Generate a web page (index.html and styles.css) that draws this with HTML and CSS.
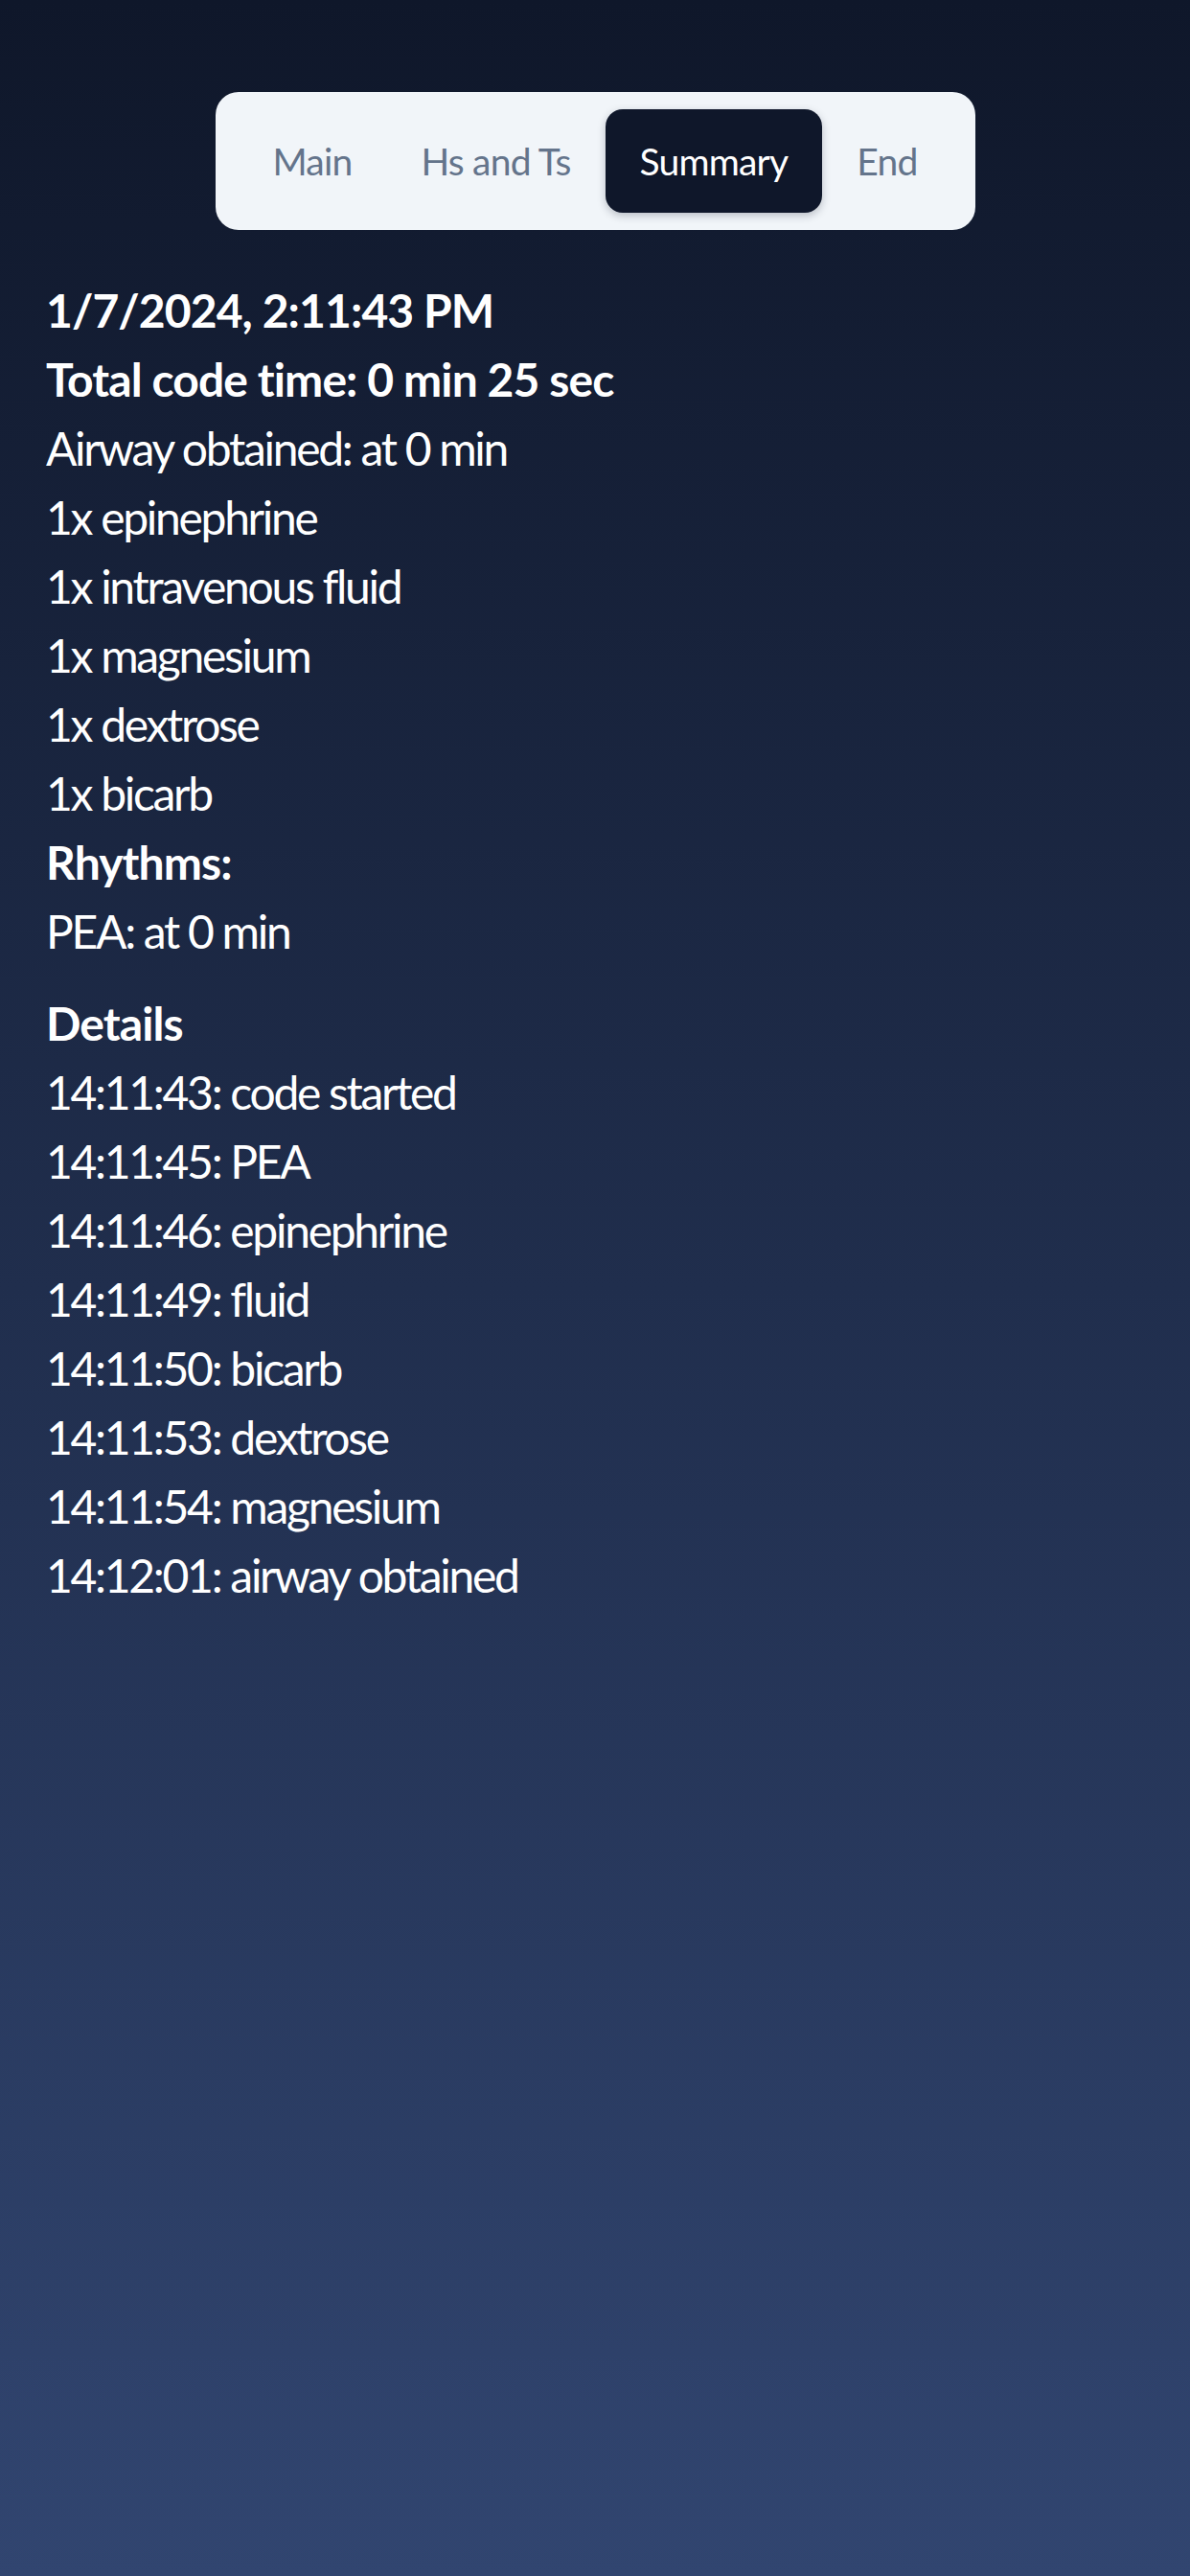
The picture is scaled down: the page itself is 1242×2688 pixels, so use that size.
FILE: index.html
```html
<!DOCTYPE html>
<html lang="en">
<head>
<meta charset="utf-8">
<title>Summary</title>
<link rel="stylesheet" href="styles.css">
</head>
<body>
<div class="page">
  <nav class="tabs">
    <span class="tab">Main</span>
    <span class="tab">Hs and Ts</span>
    <span class="tab active">Summary</span>
    <span class="tab">End</span>
  </nav>
  <section class="summary">
    <p class="bold">1/7/2024, 2:11:43 PM</p>
    <p class="bold">Total code time: 0 min 25 sec</p>
    <p>Airway obtained: at 0 min</p>
    <p>1x epinephrine</p>
    <p>1x intravenous fluid</p>
    <p>1x magnesium</p>
    <p>1x dextrose</p>
    <p>1x bicarb</p>
    <p class="bold">Rhythms:</p>
    <p>PEA: at 0 min</p>
    <h2 class="details-title">Details</h2>
    <p>14:11:43: code started</p>
    <p>14:11:45: PEA</p>
    <p>14:11:46: epinephrine</p>
    <p>14:11:49: fluid</p>
    <p>14:11:50: bicarb</p>
    <p>14:11:53: dextrose</p>
    <p>14:11:54: magnesium</p>
    <p>14:12:01: airway obtained</p>
  </section>
</div>
</body>
</html>
```

FILE: styles.css
```css
html, body {
  margin: 0;
  padding: 0;
}
body {
  width: 1242px;
  min-height: 2688px;
  background: linear-gradient(180deg, #0f172a 0%, #314570 100%);
  font-family: Lato, "Noto Sans", sans-serif;
  color: #ffffff;
}
.page {
  padding: 96px 48px 0 48px;
  display: flex;
  flex-direction: column;
}
.tabs {
  align-self: center;
  display: flex;
  background: #f1f5f9;
  border-radius: 24px;
  padding: 18px 24px;
}
.tab {
  height: 108px;
  display: flex;
  align-items: center;
  padding: 0 36px;
  font-size: 39px;
  letter-spacing: -0.8px;
  color: #64748b;
  border-radius: 18px;
}
.tab.active {
  background: #0f172a;
  color: #ffffff;
  box-shadow: 0 3px 8px rgba(15, 23, 42, 0.25);
}
.summary {
  margin-top: 48px;
}
.summary p, .details-title {
  margin: 0;
  font-size: 48px;
  line-height: 72px;
  font-weight: 400;
  letter-spacing: -2.3px;
}
.summary p.bold, .details-title {
  font-weight: 700;
  letter-spacing: -0.9px;
}
.details-title {
  margin-top: 24px;
}
```
